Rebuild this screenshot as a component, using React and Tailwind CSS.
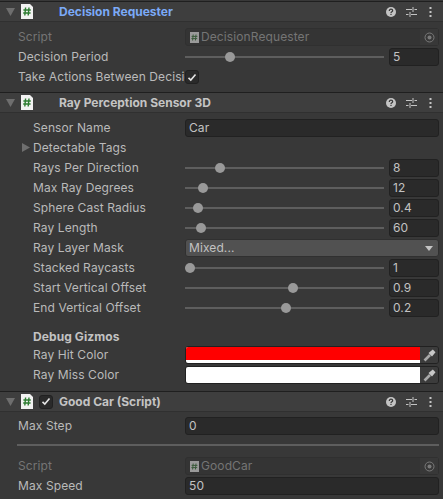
import React from 'react';

function ScriptIcon({ small }) {
  if (small) {
    return (
      <svg width="9" height="11" viewBox="0 0 9 11" className="shrink-0">
        <rect width="9" height="11" fill="#9a9a9a" />
        <path d="M3.2 2.5 2.6 8.5M6 2.5 5.4 8.5M1.6 4.4H7.4M1.4 6.6H7.2" stroke="#3a5a3a" strokeWidth="1" fill="none" />
      </svg>
    );
  }
  return (
    <svg width="12" height="15" viewBox="0 0 12 15" className="shrink-0">
      <path d="M0 0H9L12 3V15H0Z" fill="#f2f2f2" />
      <path d="M4.6 3.5 3.8 11.5M8 3.5 7.2 11.5M2.4 6H9.8M2.2 9H9.6" stroke="#2e7d32" strokeWidth="1.4" fill="none" />
    </svg>
  );
}

function Arrow() {
  return (
    <svg width="9" height="8" viewBox="0 0 9 8" className="shrink-0">
      <path d="M0 0H9L4.5 8Z" fill="#6e6e6e" />
    </svg>
  );
}

function HeaderIcons() {
  return (
    <div className="ml-auto flex items-center">
      <svg width="10" height="10" viewBox="0 0 10 10" className="mr-[10px]">
        <circle cx="5" cy="5" r="5" fill="#c4c4c4" />
        <path d="M3.3 3.9C3.3 2.8 4 2.2 5 2.2S6.7 2.8 6.7 3.7C6.7 4.8 5 4.9 5 6" stroke="#383838" strokeWidth="1.2" fill="none" />
        <rect x="4.4" y="6.8" width="1.2" height="1.2" fill="#383838" />
      </svg>
      <svg width="11" height="10" viewBox="0 0 11 10" className="mr-[12px]">
        <path d="M0 2.5H6M8.5 2.5H11M0 7.5H2.5M5 7.5H11M7 0V5M4 5V10" stroke="#c4c4c4" strokeWidth="1" fill="none" />
      </svg>
      <svg width="3" height="10" viewBox="0 0 3 10" className="mr-[11px]">
        <rect x="0.5" y="0" width="2" height="2" fill="#c4c4c4" />
        <rect x="0.5" y="4" width="2" height="2" fill="#c4c4c4" />
        <rect x="0.5" y="8" width="2" height="2" fill="#c4c4c4" />
      </svg>
    </div>
  );
}

function Check() {
  return (
    <span className="flex h-[14px] w-[14px] shrink-0 items-center justify-center rounded-[3px] border border-[#212121] bg-[#2a2a2a]">
      <svg width="10" height="9" viewBox="0 0 10 9">
        <path d="M1.5 4.8 3.8 7 8.5 1.5" stroke="#e4e4e4" strokeWidth="1.6" fill="none" />
      </svg>
    </span>
  );
}

function Header({ title, blue, check }) {
  return (
    <div className="flex h-[21px] items-center border-t border-t-[#1f1f1f] border-b border-b-[#303030] bg-[#3e3e3e] pl-[6px]">
      <Arrow />
      <span className="ml-[6px]"><ScriptIcon /></span>
      {check ? <span className="ml-[6px]"><Check /></span> : <span className="ml-[6px] w-[14px]" />}
      <span className={`ml-[6px] text-[12px] font-bold tracking-normal ${blue ? 'text-[#7baaf7]' : 'text-[#c4c4c4]'}`}>{title}</span>
      <HeaderIcons />
    </div>
  );
}

function Row({ label, indent, dim, foldout, children }) {
  return (
    <div className={`flex h-[20px] items-center pr-[4px] ${indent ? 'pl-[33px]' : 'pl-[18px]'}`}>
      <span className={`relative shrink-0 whitespace-nowrap text-[12px] ${indent ? 'w-[152px]' : 'w-[167px] overflow-hidden'} ${dim ? 'text-[#757575]' : 'text-[#bababa]'}`}>
        {foldout && (
          <svg width="8" height="9" viewBox="0 0 8 9" className="absolute left-[-11px] top-[4px]">
            <path d="M0 0 8 4.5 0 9Z" fill="#6e6e6e" />
          </svg>
        )}
        {label}
      </span>
      <div className="flex min-w-0 flex-1 items-center">{children}</div>
    </div>
  );
}

function TextField({ value }) {
  return (
    <div className="flex h-[18px] w-full items-center rounded-[3px] border border-[#212121] bg-[#2a2a2a] px-[3px] text-[12px] text-[#c2c2c2]">{value}</div>
  );
}

function ObjectField({ name }) {
  return (
    <div className="flex h-[18px] w-full items-center rounded-[3px] border border-[#303030] bg-[#343434] pl-[4px] text-[12px] text-[#757575]">
      <ScriptIcon small />
      <span className="ml-[2px]">{name}</span>
      <span className="ml-auto flex h-[16px] w-[18px] items-center justify-center bg-[#383838]">
        <svg width="11" height="11" viewBox="0 0 11 11">
          <circle cx="5.5" cy="5.5" r="4.5" stroke="#7a7a7a" strokeWidth="1" fill="none" />
          <circle cx="5.5" cy="5.5" r="2" fill="#7a7a7a" />
        </svg>
      </span>
    </div>
  );
}

function Slider({ value, pos }) {
  return (
    <div className="flex w-full items-center">
      <div className="relative h-[2px] w-[199px] shrink-0 bg-[#5e5e5e]">
        <span className="absolute top-[-4px] h-[10px] w-[10px] rounded-full bg-[#999999]" style={{ left: pos }} />
      </div>
      <div className="ml-[5px] flex-1"><TextField value={value} /></div>
    </div>
  );
}

function ColorField({ color, stripe }) {
  return (
    <div className="flex h-[18px] w-full items-stretch overflow-hidden rounded-[3px] border border-[#212121] bg-[#3c3c3c]">
      <div className="flex flex-1 flex-col bg-white">
        <div className={stripe ? 'h-[13px]' : 'h-full'} style={{ backgroundColor: color }} />
      </div>
      <div className="flex w-[18px] items-center justify-center bg-[#3c3c3c]">
        <svg width="13" height="13" viewBox="0 0 13 13">
          <path d="M1.5 11.5 7 6" stroke="#a8a8a8" strokeWidth="2.6" fill="none" />
          <path d="M5.5 4 9 7.5 12.5 3.2 9.8.5Z" fill="#c8c8c8" />
        </svg>
      </div>
    </div>
  );
}

export default function App() {
  return (
    <div className="h-[499px] w-[443px] overflow-hidden bg-[#383838] pt-px font-['Inter',sans-serif] tracking-[0.1px]">
      <Header title="Decision Requester" blue />
      <div className="h-[5px]" />
      <Row label="Script" dim><ObjectField name="DecisionRequester" /></Row>
      <Row label="Decision Period"><Slider value="5" pos="40px" /></Row>
      <Row label="Take Actions Between Decisions"><Check /></Row>
      <div className="h-[5px]" />

      <Header title="Ray Perception Sensor 3D" />
      <div className="h-[5px]" />
      <Row label="Sensor Name" indent><TextField value="Car" /></Row>
      <Row label="Detectable Tags" indent foldout>
        <span />
      </Row>
      <Row label="Rays Per Direction" indent><Slider value="8" pos="30px" /></Row>
      <Row label="Max Ray Degrees" indent><Slider value="12" pos="13px" /></Row>
      <Row label="Sphere Cast Radius" indent><Slider value="0.4" pos="8px" /></Row>
      <Row label="Ray Length" indent><Slider value="60" pos="11px" /></Row>
      <Row label="Ray Layer Mask" indent>
        <div className="flex h-[18px] w-full items-center justify-between rounded-[3px] border border-[#303030] bg-[#515151] pl-[3px] pr-[5px] text-[12px] text-[#c2c2c2]">
          <span>Mixed...</span>
          <svg width="8" height="5" viewBox="0 0 8 5"><path d="M0 0H8L4 5Z" fill="#c4c4c4" /></svg>
        </div>
      </Row>
      <Row label="Stacked Raycasts" indent><Slider value="1" pos="0px" /></Row>
      <Row label="Start Vertical Offset" indent><Slider value="0.9" pos="103px" /></Row>
      <Row label="End Vertical Offset" indent><Slider value="0.2" pos="96px" /></Row>
      <div className="h-[11px]" />
      <div className="flex h-[16px] items-center pl-[33px] text-[12px] font-bold text-[#c2c2c2]">Debug Gizmos</div>
      <Row label="Ray Hit Color" indent><ColorField color="#ff0000" stripe /></Row>
      <Row label="Ray Miss Color" indent><ColorField color="#ffffff" /></Row>
      <div className="h-[6px]" />

      <Header title="Good Car (Script)" check />
      <div className="h-[4px]" />
      <Row label="Max Step"><TextField value="0" /></Row>
      <div className="mb-[10px] ml-[17px] mr-[4px] mt-[8px] h-[2px] bg-[#5e5e5e]" />
      <Row label="Script" dim><ObjectField name="GoodCar" /></Row>
      <Row label="Max Speed"><TextField value="50" /></Row>
    </div>
  );
}
